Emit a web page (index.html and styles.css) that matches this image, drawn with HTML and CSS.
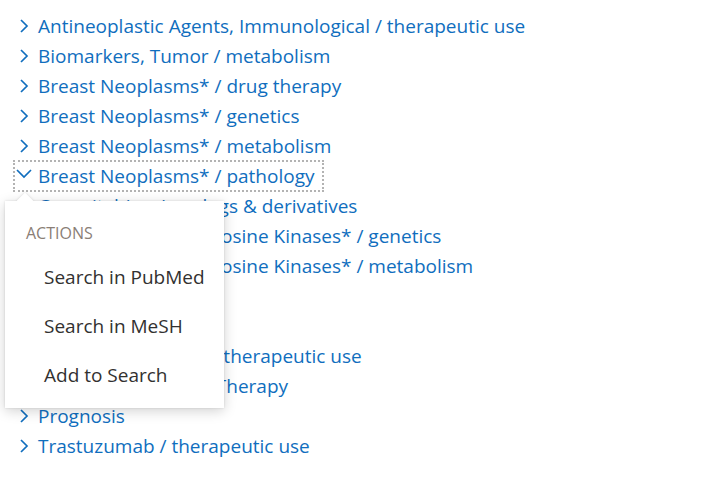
FILE: index.html
```html
<!DOCTYPE html>
<html>
<head>
<meta charset="utf-8">
<link rel="stylesheet" href="styles.css">
</head>
<body>
<div class="tree">
  <div class="row"><span class="chev"><svg viewBox="0 0 16 16"><path d="M5 2 L11 8 L5 14"/></svg></span><span class="label">Antineoplastic Agents, Immunological / therapeutic use</span></div>
  <div class="row"><span class="chev"><svg viewBox="0 0 16 16"><path d="M5 2 L11 8 L5 14"/></svg></span><span class="label">Biomarkers, Tumor / metabolism</span></div>
  <div class="row"><span class="chev"><svg viewBox="0 0 16 16"><path d="M5 2 L11 8 L5 14"/></svg></span><span class="label">Breast Neoplasms* / drug therapy</span></div>
  <div class="row"><span class="chev"><svg viewBox="0 0 16 16"><path d="M5 2 L11 8 L5 14"/></svg></span><span class="label">Breast Neoplasms* / genetics</span></div>
  <div class="row"><span class="chev"><svg viewBox="0 0 16 16"><path d="M5 2 L11 8 L5 14"/></svg></span><span class="label">Breast Neoplasms* / metabolism</span></div>
  <div class="row focused"><span class="chev"><svg viewBox="0 0 16 16"><path d="M1 2 L8 9 L15 2"/></svg></span><span class="label">Breast Neoplasms* / pathology</span></div>
  <div class="row"><span class="chev"><svg viewBox="0 0 16 16"><path d="M5 2 L11 8 L5 14"/></svg></span><span class="label">Capecitabine / analogs &amp; derivatives</span></div>
  <div class="row"><span class="chev"><svg viewBox="0 0 16 16"><path d="M5 2 L11 8 L5 14"/></svg></span><span class="label">Receptor Protein-Tyrosine Kinases* / genetics</span></div>
  <div class="row"><span class="chev"><svg viewBox="0 0 16 16"><path d="M5 2 L11 8 L5 14"/></svg></span><span class="label">Receptor Protein-Tyrosine Kinases* / metabolism</span></div>
  <div class="row"><span class="chev"><svg viewBox="0 0 16 16"><path d="M5 2 L11 8 L5 14"/></svg></span><span class="label">Female</span></div>
  <div class="row"><span class="chev"><svg viewBox="0 0 16 16"><path d="M5 2 L11 8 L5 14"/></svg></span><span class="label">Humans</span></div>
  <div class="row"><span class="chev"><svg viewBox="0 0 16 16"><path d="M5 2 L11 8 L5 14"/></svg></span><span class="label">Neoplasm Proteins / therapeutic use</span></div>
  <div class="row"><span class="chev"><svg viewBox="0 0 16 16"><path d="M5 2 L11 8 L5 14"/></svg></span><span class="label">Combined Modality Therapy</span></div>
  <div class="row"><span class="chev"><svg viewBox="0 0 16 16"><path d="M5 2 L11 8 L5 14"/></svg></span><span class="label">Prognosis</span></div>
  <div class="row"><span class="chev"><svg viewBox="0 0 16 16"><path d="M5 2 L11 8 L5 14"/></svg></span><span class="label">Trastuzumab / therapeutic use</span></div>
</div>
<div class="menu">
  <div class="beak"></div>
  <div class="menu-inner">
    <div class="menu-header">ACTIONS</div>
    <div class="menu-item">Search in PubMed</div>
    <div class="menu-item">Search in MeSH</div>
    <div class="menu-item">Add to Search</div>
  </div>
</div>
</body>
</html>
```
FILE: styles.css
```css
html, body {
  margin: 0;
  padding: 0;
  background: #ffffff;
  font-family: "Open Sans", "Noto Sans", sans-serif;
}
.tree {
  padding-top: 11px;
  display: flex;
  flex-direction: column;
  align-items: flex-start;
}
.row {
  margin-left: 14px;
  height: 30px;
  display: flex;
  align-items: center;
  gap: 6px;
  color: #106ebe;
  font-size: 19px;
  line-height: 30px;
  white-space: nowrap;
}
.chev {
  padding-left: 2px;
  width: 16px;
  height: 16px;
  display: flex;
}
.chev svg {
  width: 16px;
  height: 16px;
  fill: none;
  stroke: #106ebe;
  stroke-width: 1.7;
}
.focused {
  outline: 2px dotted #b3b3b3;
  outline-offset: -1px;
  padding-right: 8px;
}
.menu {
  position: absolute;
  left: 5px;
  top: 201px;
  width: 219px;
  height: 207px;
  box-shadow: 0 3px 12px rgba(0, 0, 0, 0.18), 0 0 2px rgba(0, 0, 0, 0.12);
  background: #ffffff;
}
.beak {
  position: absolute;
  left: 14px;
  top: -6px;
  width: 12px;
  height: 12px;
  background: #ffffff;
  transform: rotate(45deg);
  box-shadow: 0 0 3px rgba(0, 0, 0, 0.15);
}
.menu-inner {
  position: relative;
  background: #ffffff;
  height: 100%;
  box-sizing: border-box;
  padding: 8px 0;
}
.menu-header {
  box-sizing: border-box;
  height: 44px;
  padding: 12px 0 0 21px;
  line-height: 24px;
  font-size: 16px;
  color: #8a7e76;
}
.menu-item {
  height: 49px;
  line-height: 49px;
  padding-left: 39px;
  font-size: 19px;
  color: #323130;
}
```
